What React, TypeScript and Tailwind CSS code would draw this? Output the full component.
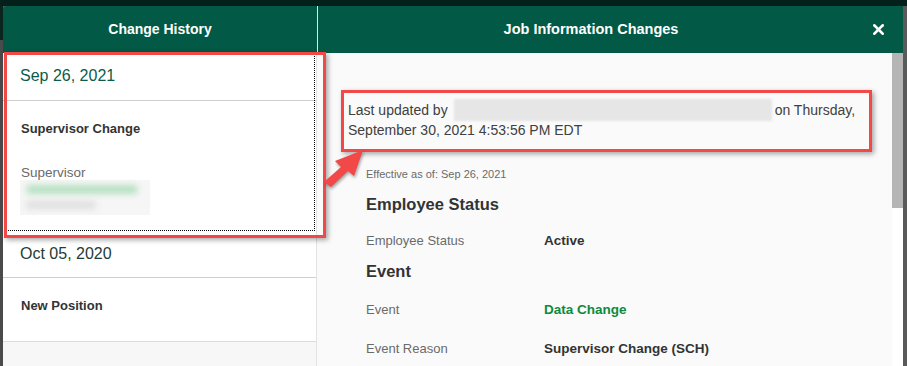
import { X } from 'lucide-react';

const font = { fontFamily: '"Liberation Sans", Arial, sans-serif' };

function HistoryList() {
    return (
        <div className="w-[314px] flex flex-col bg-white border-r border-[#e2e2e2]">
            {/* selected entry */}
            <div className="outline-1 outline-dotted outline-black -outline-offset-2">
                <div className="h-[48px] pl-[17px] pt-[11px] border-b border-[#cfcfcf] text-[16px] text-[#0b5c49]">
                    Sep 26, 2021
                </div>
                <div className="h-[131px] pl-[18px] pt-[18px]">
                    <div className="text-[13px] font-bold text-[#333]">Supervisor Change</div>
                    <div className="mt-[26px] text-[13.5px] text-[#6a6a6a] leading-[16px]">Supervisor</div>
                    <div className="-ml-[1px] w-[130px] h-[35px] bg-[#f6f6f6] -mt-[1px] pt-[5px] pl-[6px]">
                        <div className="w-[112px] h-[9px] rounded-full bg-[#b5e0c2] blur-[3px]" />
                        <div className="mt-[7px] w-[70px] h-[8px] rounded-full bg-[#dedede] blur-[3px]" />
                    </div>
                </div>
            </div>
            <div className="h-[46px] pl-[17px] pt-[10px] border-b border-[#cfcfcf] text-[16px] text-[#1d3c35]">
                Oct 05, 2020
            </div>
            <div className="h-[64px] pl-[18px] pt-[18px] border-b border-[#dcdcdc] text-[13px] font-bold text-[#333]">
                New Position
            </div>
            <div className="flex-1 bg-[#f7f7f7]" />
        </div>
    );
}

function FieldRow({ label, value, green }: { label: string; value: string; green?: boolean }) {
    return (
        <div className="flex h-[18px] items-center">
            <div className="w-[178px] text-[13px] text-[#6a6a6a]">{label}</div>
            <div className={green ? 'text-[13.5px] font-bold text-[#0d8a3c]' : 'text-[13.5px] font-bold text-[#333]'}>
                {value}
            </div>
        </div>
    );
}

function Details() {
    return (
        <div className="flex-1 flex bg-[#fafafa]">
            <div className="flex-1 flex flex-col pt-[46px] pl-[31px]">
                <div className="text-[14px] leading-[18px] text-[#404040]">
                    <div className="flex items-center">
                        <span>Last updated by</span>
                        <span className="ml-[6px] mr-[3px] w-[318px] h-[22px] bg-[#e6e6e6] blur-[1px]" />
                        <span>on Thursday,</span>
                    </div>
                    <div>September 30, 2021 4:53:56 PM EDT</div>
                </div>
                <div className="pl-[18px]">
                    <div className="mt-[28px] text-[11px] leading-[14px] text-[#6a6a6a]">Effective as of: Sep 26, 2021</div>
                    <div className="mt-[13px] text-[16.5px] leading-[20px] font-bold text-[#333]">Employee Status</div>
                    <div className="mt-[18px]">
                        <FieldRow label="Employee Status" value="Active" />
                    </div>
                    <div className="mt-[11px] text-[16.5px] leading-[20px] font-bold text-[#333]">Event</div>
                    <div className="mt-[20px]">
                        <FieldRow label="Event" value="Data Change" green />
                    </div>
                    <div className="mt-[21px]">
                        <FieldRow label="Event Reason" value="Supervisor Change (SCH)" />
                    </div>
                </div>
            </div>
            {/* scrollbar */}
            <div className="w-[11px] flex flex-col bg-white">
                <div className="h-[155px] bg-[#b5b5b5]" />
            </div>
        </div>
    );
}

export default function App() {
    return (
        <div className="w-[907px] h-[366px] overflow-hidden flex flex-col bg-[#575757] relative" style={font}>
            <div className="h-[6px] bg-[#03201a] shrink-0" />
            <div className="flex flex-1 min-h-0">
                <div className="w-[3px] flex flex-col">
                    <div className="h-[34px] bg-[#0a241e]" />
                    <div className="flex-1 bg-[#4a4a4a]" />
                </div>
                <div className="w-[900px] flex flex-col rounded-tl-[4px] overflow-hidden">
                    {/* header */}
                    <div className="h-[47px] flex bg-[#025a46] text-white text-[14px] font-bold shrink-0">
                        <div className="w-[314px] flex items-center justify-center">Change History</div>
                        <div className="w-[1px] bg-[#d8e6e2]" />
                        <div className="flex-1 flex items-center">
                            <div className="flex-1 text-center text-[14.5px] pl-[2px]">Job Information Changes</div>
                            <div className="w-[41px] flex items-center justify-start pl-[8px]">
                                <X size={17} strokeWidth={3.5} />
                            </div>
                        </div>
                    </div>
                    <div className="flex flex-1 min-h-0">
                        <HistoryList />
                        <Details />
                    </div>
                </div>
                <div className="flex-1 bg-[#5a5a5a]" />
            </div>

            {/* annotation: red boxes and arrow */}
            <div className="absolute left-[4px] top-[52px] w-[322px] h-[186px] border-[3px] border-[#f24848] shadow-[2px_2px_5px_rgba(0,0,0,0.35)]" />
            <div className="absolute left-[341px] top-[90px] w-[531px] h-[62px] border-[3px] border-[#f24848] shadow-[2px_2px_5px_rgba(0,0,0,0.35)]" />
            <svg className="absolute left-[318px] top-[145px]" width="52" height="46" viewBox="0 0 52 46">
                <g style={{ filter: 'drop-shadow(1px 2px 1.5px rgba(0,0,0,0.35))' }}>
                    <path d="M6 37 L23 22 L17 16 L45 5 L36 31 L30 26 L13 42 Z" fill="#f24848" />
                </g>
            </svg>
        </div>
    );
}
